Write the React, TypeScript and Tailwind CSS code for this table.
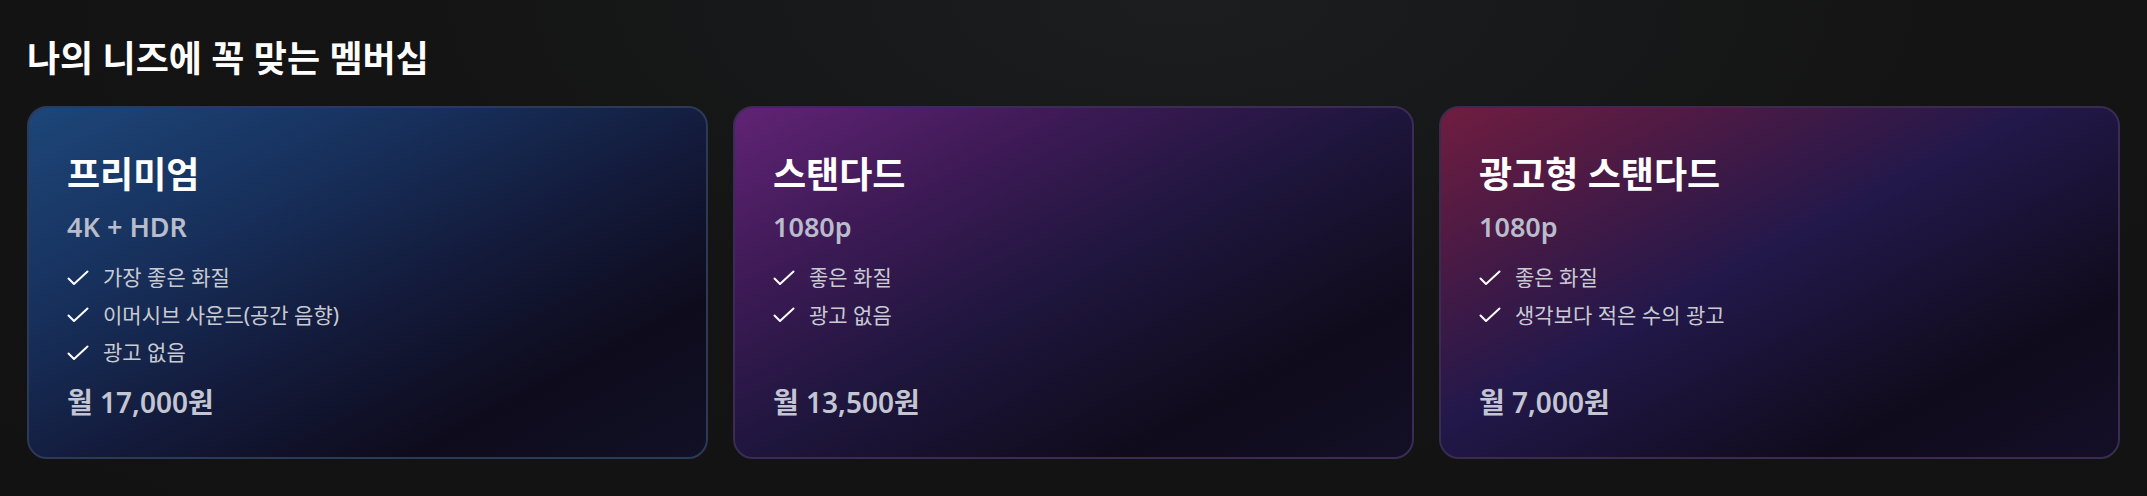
const FONT = "font-['Noto_Sans','Noto_Sans_CJK_KR',sans-serif]";

type Plan = {
  name: string;
  quality: string;
  features: string[];
  price: string;
  bg: string;
  border: string;
};

const PLANS: Plan[] = [
  {
    name: "프리미엄",
    quality: "4K + HDR",
    features: ["가장 좋은 화질", "이머시브 사운드(공간 음향)", "광고 없음"],
    price: "월 17,000원",
    bg: "bg-[linear-gradient(152deg,#1d4679_0%,#17305c_30%,#131a3a_55%,#0e0b1c_78%,#121026_100%)]",
    border: "border-[#2c3a58]",
  },
  {
    name: "스탠다드",
    quality: "1080p",
    features: ["좋은 화질", "광고 없음"],
    price: "월 13,500원",
    bg: "bg-[linear-gradient(152deg,#612375_0%,#3e1a56_25%,#20163f_48%,#0f0b1b_78%,#130f26_100%)]",
    border: "border-[#3a2c55]",
  },
  {
    name: "광고형 스탠다드",
    quality: "1080p",
    features: ["좋은 화질", "생각보다 적은 수의 광고"],
    price: "월 7,000원",
    bg: "bg-[linear-gradient(152deg,#701d3f_0%,#4a1a45_22%,#22184a_45%,#0f0b1b_78%,#140f28_100%)]",
    border: "border-[#3a2c50]",
  },
];

function CheckIcon() {
  return (
    <svg
      viewBox="0 0 22 16"
      fill="none"
      stroke="currentColor"
      strokeWidth={2}
      strokeLinecap="round"
      strokeLinejoin="round"
      className="h-[16px] w-[22px] shrink-0 text-white"
      aria-hidden
    >
      <path d="M1.5 8.5 7 14 20.5 1.5" />
    </svg>
  );
}

function PlanCard({ plan }: { plan: Plan }) {
  return (
    <section
      className={`flex h-[353px] flex-col rounded-[20px] border-2 px-[38px] pt-[46px] pb-[38px] ${plan.bg} ${plan.border}`}
    >
      <h3 className="text-[36px] font-semibold leading-[42px] text-white">{plan.name}</h3>
      <p className="mt-[15px] text-[27px] font-semibold leading-[31px] text-[#b8bccb]">
        {plan.quality}
      </p>
      <ul className="mt-[17px]">
        {plan.features.map((f) => (
          <li key={f} className="flex h-[37.5px] items-center gap-[14px] text-[21px] text-[#c9cbd3]">
            <CheckIcon />
            <span>{f}</span>
          </li>
        ))}
      </ul>
      <p className="mt-auto text-[28px] font-semibold leading-[34px] text-[#c3c6d2]">{plan.price}</p>
    </section>
  );
}

export default function App() {
  return (
    <div
      className={`min-h-[496px] w-full bg-[radial-gradient(ellipse_at_55%_0%,#1b1d1f_0%,#141414_45%,#121212_100%)] px-[27px] pt-[38px] ${FONT}`}
    >
      <h2 className="text-[36px] font-semibold leading-[42px] text-white">나의 니즈에 꼭 맞는 멤버십</h2>
      <div className="mt-[26px] grid grid-cols-3 gap-[25px]">
        {PLANS.map((p) => (
          <PlanCard key={p.name} plan={p} />
        ))}
      </div>
    </div>
  );
}
